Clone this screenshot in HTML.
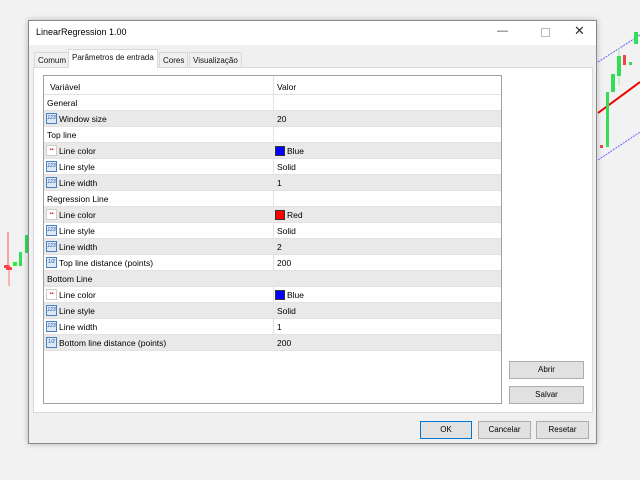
<!DOCTYPE html><html><head><style>
*{margin:0;padding:0;box-sizing:border-box}
body{width:640px;height:480px;background:#f2f2f2;position:relative;overflow:hidden;font-family:"Liberation Sans",sans-serif;font-size:8.5px;color:#000}
.a{position:absolute}
.dlg{left:28px;top:20px;width:569px;height:424px;background:#f0f0f0;border:1px solid #888;box-shadow:0 0 6px rgba(0,0,0,.25)}
.tb{left:0;top:0;width:567px;height:24px;background:#fff}
.tab{top:30px;height:16px;border:1px solid #d9d9d9;border-bottom:none;background:#f0f0f0;padding:3px 3px 0;font-size:8px;color:#111}
.panel{left:4px;top:46px;width:560px;height:346px;background:#fff;border:1px solid #d9d9d9}
.grid{left:9px;top:7px;width:459px;height:329px;border:1px solid #a0a0a0;background:#fff}
.row{position:absolute;left:0;width:457px;height:16px;border-bottom:1px solid #e2e2e2}
.row span{position:absolute;top:3px}
.g{background:#e9e9e9}
.ic{position:absolute;left:2px;top:2px;width:11px;height:11px;border:1px solid #4a7ec0;background:#dde9f8;font-size:5px;color:#1a4f9a;line-height:9px;text-align:center}
.ic2{position:absolute;left:2px;top:2px;width:11px;height:11px;border:1px solid #ccc;background:#fff;font-size:6px;color:#c33;line-height:9px;text-align:center}
.sw{position:absolute;left:231px;top:3px;width:10px;height:10px;border:1px solid #333}
.btn{height:18px;border:1px solid #adadad;background:#e1e1e1;text-align:center;line-height:16px;font-size:8px}
</style></head><body>
<svg class="a" style="left:0;top:0" width="640" height="480">
<line x1="8" y1="232" x2="8" y2="270" stroke="#f55"/><rect x="4" y="265" width="6" height="3" fill="#f44"/>
<line x1="9" y1="265" x2="9" y2="286" stroke="#f77"/><rect x="6" y="267" width="6" height="3" fill="#f44"/>
<rect x="13" y="262" width="4" height="4" fill="#3e3"/>
<rect x="19" y="252" width="3" height="14" fill="#3d5"/><rect x="25" y="235" width="3" height="18" fill="#3d5"/>
<line x1="598" y1="62" x2="640" y2="35" stroke="#66f" stroke-dasharray="2,1"/>
<line x1="598" y1="113" x2="640" y2="82" stroke="#e00" stroke-width="2"/>
<line x1="598" y1="160" x2="640" y2="132" stroke="#66f" stroke-dasharray="2,1"/>
<rect x="606" y="92" width="3" height="55" fill="#3d5"/><rect x="600" y="145" width="3" height="3" fill="#e44"/>
<rect x="611" y="74" width="4" height="18" fill="#3d5"/><line x1="619" y1="48" x2="619" y2="85" stroke="#9e9"/><rect x="617" y="56" width="4" height="20" fill="#3d5"/>
<rect x="623" y="55" width="3" height="10" fill="#e44"/><rect x="629" y="62" width="3" height="3" fill="#3d5"/><rect x="634" y="32" width="4" height="12" fill="#3d5"/>
</svg>
<div class="a dlg">
<div class="a tb"><span class="a" style="left:7px;top:6px;font-size:9px">LinearRegression 1.00</span>
<span class="a" style="left:468px;top:4px;font-size:11px;color:#444">—</span>
<span class="a" style="left:512px;top:7px;width:9px;height:9px;border:1px solid #bbb"></span>
<span class="a" style="left:545px;top:2px;font-size:13px;color:#333">✕</span></div>
<div class="a tab" style="left:5px;top:31px;height:15px">Comum</div>
<div class="a tab" style="left:39px;top:28px;height:19px;background:#fff;z-index:2">Parâmetros de entrada</div>
<div class="a tab" style="left:130px;top:31px;height:15px">Cores</div>
<div class="a tab" style="left:160px;top:31px;height:15px">Visualização</div>
<div class="a panel">
<div class="a grid">
<div class="row" style="top:0;height:19px"><span style="left:6px;top:6px">Variável</span><span style="left:233px;top:6px">Valor</span></div>
<div style="position:absolute;left:229px;top:0;width:1px;height:272px;background:#e2e2e2"></div>
<div class="row" style="top:19px"><span style="left:3px">General</span></div>
<div class="row g" style="top:35px"><i class="ic">123</i><span style="left:15px">Window size</span><span style="left:233px">20</span></div>
<div class="row" style="top:51px"><span style="left:3px">Top line</span></div>
<div class="row g" style="top:67px"><i class="ic2">▪▪</i><span style="left:15px">Line color</span><i class="sw" style="background:#00f"></i><span style="left:243px">Blue</span></div>
<div class="row" style="top:83px"><i class="ic">123</i><span style="left:15px">Line style</span><span style="left:233px">Solid</span></div>
<div class="row g" style="top:99px"><i class="ic">123</i><span style="left:15px">Line width</span><span style="left:233px">1</span></div>
<div class="row" style="top:115px"><span style="left:3px">Regression Line</span></div>
<div class="row g" style="top:131px"><i class="ic2">▪▪</i><span style="left:15px">Line color</span><i class="sw" style="background:#f00"></i><span style="left:243px">Red</span></div>
<div class="row" style="top:147px"><i class="ic">123</i><span style="left:15px">Line style</span><span style="left:233px">Solid</span></div>
<div class="row g" style="top:163px"><i class="ic">123</i><span style="left:15px">Line width</span><span style="left:233px">2</span></div>
<div class="row" style="top:179px"><i class="ic">1/2</i><span style="left:15px">Top line distance (points)</span><span style="left:233px">200</span></div>
<div class="row g" style="top:195px"><span style="left:3px">Bottom Line</span></div>
<div class="row" style="top:211px"><i class="ic2">▪▪</i><span style="left:15px">Line color</span><i class="sw" style="background:#00f"></i><span style="left:243px">Blue</span></div>
<div class="row g" style="top:227px"><i class="ic">123</i><span style="left:15px">Line style</span><span style="left:233px">Solid</span></div>
<div class="row" style="top:243px"><i class="ic">123</i><span style="left:15px">Line width</span><span style="left:233px">1</span></div>
<div class="row g" style="top:259px"><i class="ic">1/2</i><span style="left:15px">Bottom line distance (points)</span><span style="left:233px">200</span></div>
</div>
<div class="a btn" style="left:475px;top:293px;width:75px">Abrir</div>
<div class="a btn" style="left:475px;top:318px;width:75px">Salvar</div>
</div>
<div class="a btn" style="left:391px;top:400px;width:52px;border-color:#0078d7">OK</div>
<div class="a btn" style="left:449px;top:400px;width:53px">Cancelar</div>
<div class="a btn" style="left:507px;top:400px;width:53px">Resetar</div>
</div>
</body></html>
